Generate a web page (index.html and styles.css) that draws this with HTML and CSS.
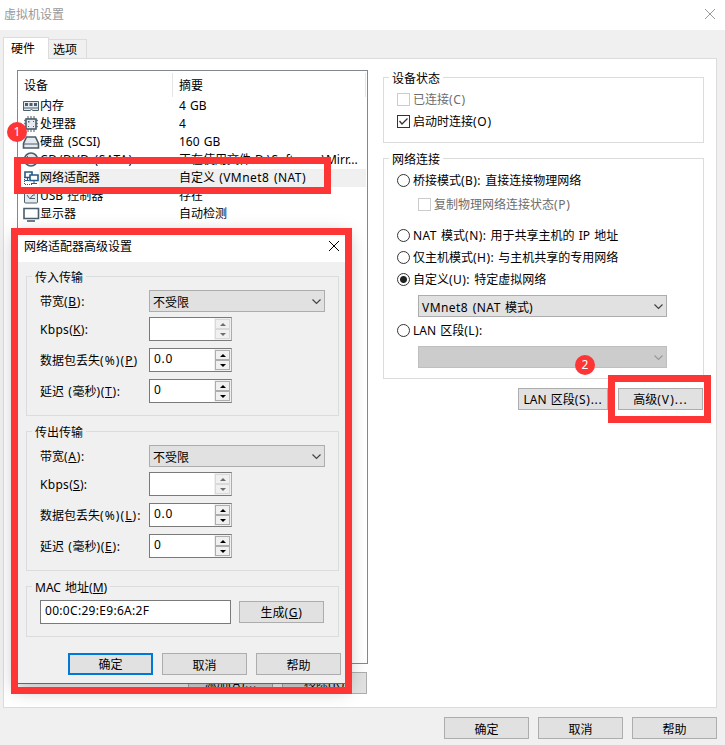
FILE: index.html
```html
<!DOCTYPE html>
<html lang="zh-CN">
<head>
<meta charset="utf-8">
<title>虚拟机设置</title>
<link rel="stylesheet" href="styles.css">
</head>
<body>
<div class="window">
  <header class="titlebar"><span>虚拟机设置</span>
    <svg class="close" width="12" height="12" viewBox="0 0 12 12"><path d="M1 1L11 11M11 1L1 11"/></svg>
  </header>
  <nav class="tabs"><span class="tab active">硬件</span><span class="tab">选项</span></nav>
  <main class="panel">
    <section class="left">
      <div class="list">
        <div class="row head"><span class="name">设备</span><span class="sum">摘要</span></div>
        <div class="row"><svg class="ico" viewBox="0 0 18 18"><path class="fillp" d="M1.500 4.500H16.500V13.500H11L9.500 12.500L8 13.500H1.500Z"/><path class="dark" d="M3 6h3v3H3zM7.500 6h3v3h-3zM12 6h3v3h-3z"/><path d="M2 11H16"/></svg><span class="name">内存</span><span class="sum">4 GB</span></div>
        <div class="row"><svg class="ico" viewBox="0 0 18 18"><path class="pins" d="M6 1V17M9 1V17M12 1V17M2 5.500H16M2 8.500H16M2 11.500H16"/><rect class="fillp thick" x="4" y="4" width="10" height="10"/><path class="dark" d="M6 6h1.500v1.500H6zM11 6h1v1h-1zM6 11h1v1H6zM11 11h1v1h-1z"/></svg><span class="name">处理器</span><span class="sum">4</span></div>
        <div class="row"><svg class="ico" viewBox="0 0 18 18"><path class="fillp thick" d="M4.500 4H13.500L16.500 10.500V15H1.500V10.500Z"/><path d="M1.500 11H16.500"/></svg><span class="name">硬盘 (SCSI)</span><span class="sum">160 GB</span></div>
        <div class="row"><svg class="ico" viewBox="0 0 18 18"><circle class="fillp thick" cx="9" cy="8.500" r="6.500"/><circle cx="9" cy="8.500" r="2"/><path d="M5 5L8 8"/></svg><span class="name"><b class="w">CD/DVD (SATA)</b></span><span class="sum">正在使用文件 D:\Software\Mirr...</span></div>
        <div class="row selected"><svg class="ico net" viewBox="0 0 18 18"><path class="fillw thick" d="M3 3H10V8.500H3Z"/><path d="M5.500 9V11.500M2.500 11.500H7"/><path class="fillw thick" d="M8 6H16V11.500H8Z"/><path d="M12 12V14M9 14.500H15"/><path class="dash" d="M2.500 8V16M3 15.500H10"/></svg><span class="name">网络适配器</span><span class="sum">自定义 <b>(VMnet8 (NAT)</b></span></div>
        <div class="row"><svg class="ico" viewBox="0 0 18 18"><rect class="fillp" x="2.500" y="3.500" width="13" height="12.500" rx="1"/><path d="M5 8L7.500 11.500H13M8 11.500L11 8H13"/></svg><span class="name">USB 控制器</span><span class="sum">存在</span></div>
        <div class="row"><svg class="ico" viewBox="0 0 18 18"><path class="fillw thick" d="M2 3.500H16.500V13.500H2Z"/><path class="thick" d="M5 16H13"/></svg><span class="name">显示器</span><span class="sum">自动检测</span></div>
      </div>
      <div class="listbtns"><button>添加<b class="w">(A)...</b></button><button>移除<b class="w">(R)</b></button></div>
    </section>
    <section class="right">
      <div class="group state">
        <div class="legend">设备状态</div>
        <label class="opt disabled"><i class="box"></i><span>已连接<b class="w">(C)</b></span></label>
        <label class="opt"><i class="box"><svg viewBox="0 0 13 13"><path d="M2.500 6L5 9L10.500 3.500"/></svg></i><span>启动时连接<b class="w">(O)</b></span></label>
      </div>
      <div class="group conn">
        <div class="legend">网络连接</div>
        <label class="opt"><i class="radio"></i><span>桥接模式<b>(B):</b> 直接连接物理网络</span></label>
        <label class="opt sub disabled"><i class="box"></i><span>复制物理网络连接状态<b class="w">(P)</b></span></label>
        <label class="opt nat"><i class="radio"></i><span><b>NAT</b> 模式<b>(N):</b> 用于共享主机的 IP 地址</span></label>
        <label class="opt"><i class="radio"></i><span>仅主机模式<b>(H):</b> 与主机共享的专用网络</span></label>
        <label class="opt"><i class="radio on"></i><span>自定义<b>(U):</b> 特定虚拟网络</span></label>
        <div class="combo wide"><span><b>VMnet8 (NAT</b> 模式<b>)</b></span><svg class="chev" viewBox="0 0 9 6"><path d="M.5 .5L4.500 4.500L8.500 .5"/></svg></div>
        <label class="opt"><i class="radio"></i><span>LAN 区段<b>(L):</b></span></label>
        <div class="combo wide off"><span></span><svg class="chev" viewBox="0 0 9 6"><path d="M.5 .5L4.500 4.500L8.500 .5"/></svg></div>
      </div>
      <div class="connbtns"><button class="lan">LAN 区段<b class="w">(S)...</b></button><button>高级<b class="ww">(V)...</b></button></div>
    </section>
  </main>
  <footer class="buttons"><button>确定</button><button>取消</button><button>帮助</button></footer>

  <div class="mark device"></div>
  <div class="mark advanced"></div>
  <div class="badge one">1</div>
  <div class="badge two">2</div>

  <div class="shade"></div>
  <div class="dialog">
    <header class="dtitle"><span>网络适配器高级设置</span><svg class="close" width="12" height="12" viewBox="0 0 12 12"><path d="M1 1L11 11M11 1L1 11"/></svg></header>
    <div class="group transfer">
      <div class="legend">传入传输</div>
      <div class="field first"><span class="lab">带宽<b class="w">(<u>B</u>):</b></span><div class="combo"><span>不受限</span><svg class="chev" viewBox="0 0 9 6"><path d="M.5 .5L4.500 4.500L8.500 .5"/></svg></div></div>
      <div class="field"><span class="lab"><b class="n">Kbps(<u>K</u>):</b></span><div class="spin off"><span></span><div class="arrows"><i class="up"></i><i class="down"></i></div></div></div>
      <div class="field"><span class="lab">数据包丢失<b class="ww">(%)(<u>P</u>)</b></span><div class="spin"><span><b class="w">0.0</b></span><div class="arrows"><i class="up"></i><i class="down"></i></div></div></div>
      <div class="field"><span class="lab">延迟 <b class="w">(</b>毫秒<b class="w">)(<u>T</u>):</b></span><div class="spin"><span>0</span><div class="arrows"><i class="up"></i><i class="down"></i></div></div></div>
    </div>
    <div class="group transfer">
      <div class="legend">传出传输</div>
      <div class="field first"><span class="lab">带宽<b class="w">(<u>A</u>):</b></span><div class="combo"><span>不受限</span><svg class="chev" viewBox="0 0 9 6"><path d="M.5 .5L4.500 4.500L8.500 .5"/></svg></div></div>
      <div class="field"><span class="lab"><b class="n">Kbps(<u>S</u>):</b></span><div class="spin off"><span></span><div class="arrows"><i class="up"></i><i class="down"></i></div></div></div>
      <div class="field"><span class="lab">数据包丢失<b class="ww">(%)(<u>L</u>):</b></span><div class="spin"><span><b class="w">0.0</b></span><div class="arrows"><i class="up"></i><i class="down"></i></div></div></div>
      <div class="field"><span class="lab">延迟 <b class="w">(</b>毫秒<b class="w">)(<u>E</u>):</b></span><div class="spin"><span>0</span><div class="arrows"><i class="up"></i><i class="down"></i></div></div></div>
    </div>
    <div class="group mac">
      <div class="legend">MAC 地址(<u>M</u>)</div>
      <div class="macrow"><div class="input"><b class="n">00:0C:29:E9:6A:2F</b></div><button>生成<b class="w">(<u>G</u>)</b></button></div>
    </div>
    <div class="buttons"><button class="default">确定</button><button>取消</button><button>帮助</button></div>
  </div>
  <div class="mark dlg"></div>
</div>
</body>
</html>
```
FILE: styles.css
```css
* { box-sizing: border-box; }
body { margin: 0; font: 12px/18px "Noto Sans", "Noto Sans CJK SC", sans-serif; color: #000; word-spacing: 1px; }
/* Latin runs are tracked slightly wider than the Chinese text */
b { font-weight: normal; letter-spacing: .45px; }
b.n { letter-spacing: .3px; }
b.w { letter-spacing: .7px; }
b.ww { letter-spacing: 1.1px; }
.window { position: relative; width: 725px; height: 745px; background: #f0f0f0; overflow: hidden; }
.titlebar { height: 30px; background: #fff; display: flex; justify-content: space-between; padding: 6px 9px 0 4px; color: #999; }
.close { fill: none; stroke: #999; stroke-width: 1; margin-top: 2px; }
.tabs { display: flex; align-items: flex-end; height: 29px; padding-left: 3px; position: relative; z-index: 1; }
.tab { height: 20px; width: 38px; border: 1px solid #dcdcdc; border-left: 0; padding: 0 0 0 4px; line-height: 20px; }
.tab.active { height: 22px; width: 46px; background: #fff; border-left: 1px solid #dcdcdc; border-bottom: 0; padding-left: 7px; line-height: 21px; }
.panel { display: flex; align-items: flex-start; width: 714px; height: 650px; margin: -1px 0 0 3px; background: #fff; border: 1px solid #dcdcdc; padding: 11px 0 0 13px; }
.left { width: 351px; }
.list { height: 594px; border: 1px solid #828790; padding: 1px; }
.row { display: flex; height: 18px; align-items: center; white-space: nowrap; }
.row .name { width: 139px; }
.row.head { height: 25px; }
.row.head .name { width: 154px; height: 24px; border-right: 1px solid #e5e5e5; padding-left: 5px; line-height: 26px; }
.row.head .sum { flex: 1; height: 24px; border-right: 1px solid #e5e5e5; line-height: 26px; }
.row .sum { padding-left: 6px; }
.row.selected { background: linear-gradient(90deg, #fff 20px, #f0f0f0 20px); }
.ico { width: 18px; height: 18px; margin: 0 0 0 3px; flex: none; fill: none; stroke: #4c5d6b; stroke-width: 1; }
.ico ~ .sum { margin-left: -6px; }
.thick { stroke-width: 1.6; }
.fillp { fill: #e4eaed; }
.fillw { fill: #fff; }
.dark { fill: #4c5d6b; stroke: none; }
.pins { stroke: #74828d; stroke-width: 1.3; }
.net { stroke: #245a88; }
.dash { stroke-dasharray: 1 1; }
.listbtns { display: flex; justify-content: flex-end; gap: 9px; margin: 8px 1px 0 0; }
button { font: inherit; word-spacing: inherit; line-height: 20px; color: #000; width: 85px; height: 22px; padding: 1px 0 0; background: #e1e1e1; border: 1px solid #adadad; border-radius: 0; white-space: nowrap; flex: none; }
.group { border: 1px solid #dcdcdc; }
.legend { width: max-content; height: 18px; margin: -9px 0 0 4px; padding: 1px 3px 0; background: #fff; }
.right { margin: 7px 0 0 15px; width: 321px; }
.state { height: 66px; padding-left: 1px; }
.conn { height: 221px; margin-top: 15px; padding-left: 1px; }
.opt { display: flex; align-items: center; height: 18px; gap: 3px; margin: 4px 0 0 12px; white-space: nowrap; }
.opt.sub { margin: 6px 0 0 33px; }
.opt.nat { margin-top: 13px; }
.disabled { color: #6d6d6d; }
.box, .radio { display: block; width: 13px; height: 13px; border: 1px solid #333; background: #fff; flex: none; position: relative; top: -1px; }
.disabled .box { border-color: #ccc; }
.box svg { display: block; width: 13px; height: 13px; margin: -1px; fill: none; stroke: #333; stroke-width: 1.3; }
.radio { border-radius: 50%; }
.radio.on { background: radial-gradient(circle, #222 3px, #fff 4px); }
.combo { display: flex; align-items: center; justify-content: space-between; width: 176px; height: 22px; border: 1px solid #adadad; background: #e1e1e1; padding: 3px 3px 0 3px; }
.combo.wide { width: 249px; margin: 6px 0 0 33px; }
.combo.off { background: #ccc; border-color: #bfbfbf; }
.conn .combo + .opt { margin-top: 5px; }
.chev { width: 9px; height: 6px; fill: none; stroke: #444; stroke-width: 1.2; margin-top: -2px; }
.off .chev { stroke: #999; }
.connbtns { display: flex; justify-content: flex-end; gap: 10px; margin: 9px 1px 0 0; }
.connbtns .lan { width: 90px; }
.buttons { display: flex; justify-content: flex-end; gap: 9px; }
.buttons button { padding-top: 2px; }
footer.buttons { margin: 9px 8px 0 0; }
.mark { position: absolute; border: 7px solid #fd3535; }
.device { left: 14px; top: 157px; width: 317px; height: 37px; }
.advanced { left: 608px; top: 375px; width: 103px; height: 48px; }
.dlg { left: 11px; top: 228px; width: 341px; height: 466px; }
.badge { position: absolute; width: 20px; height: 20px; border-radius: 50%; background: #fd3535; color: #fff; text-align: center; line-height: 20px; z-index: 2; }
.one { left: 7px; top: 122px; }
.two { left: 575px; top: 355px; }
.shade { position: absolute; left: 18px; top: 235px; width: 327px; height: 448px; box-shadow: 0 3px 18px 3px rgba(0,0,0,.28); }
.dialog { position: absolute; left: 18px; top: 235px; width: 327px; height: 449px; background: #f0f0f0; border-bottom: 1px solid #666; padding: 0 7px 0 8px; }
.dialog .legend { background: #f0f0f0; }
.dtitle { height: 27px; margin: 0 -7px 14px -8px; padding: 3px 5px 0 6px; background: #fff; display: flex; justify-content: space-between; }
.dtitle .close { stroke: #000; }
.transfer { width: 313px; height: 140px; margin-bottom: 15px; padding-left: 13px; }
.transfer .legend, .mac .legend { margin-left: -8px; }
.field { display: flex; align-items: center; height: 24px; margin-top: 7px; }
.field.first { height: 22px; margin-top: 4px; }
.field.first + .field { margin-top: 5px; }
.lab { width: 109px; white-space: nowrap; padding-top: 2px; }
.spin { display: flex; width: 83px; height: 24px; border: 1px solid #7a7a7a; border-right-color: #adadad; background: #fff; }
.spin span { width: 64px; padding-left: 4px; line-height: 20px; }
.arrows { width: 17px; display: flex; flex-direction: column; padding: 1px; background: #f0f0f0; }
.arrows i { height: 10px; border: 1px solid #adadad; display: flex; justify-content: center; align-items: center; }
.arrows i::after { content: ""; border: 3px solid transparent; border-top: 0; border-bottom-color: #000; }
.arrows .down::after { border-top: 3px solid #000; border-bottom: 0; }
.off .arrows i { border-color: #d9d9d9; }
.off .arrows .up::after { border-bottom-color: #6d6d6d; }
.off .arrows .down::after { border-top-color: #6d6d6d; }
.mac { width: 313px; height: 51px; padding-left: 13px; }
.macrow { display: flex; align-items: center; gap: 8px; margin-top: 4px; }
.input { width: 191px; height: 24px; border: 1px solid #7a7a7a; background: #fff; padding-left: 4px; line-height: 20px; }
.dialog .buttons { margin: 16px -3px 0 0; }
.dialog .default { border: 2px solid #0078d7; line-height: 18px; padding-top: 1px; }
u { text-underline-offset: 1px; }
```
